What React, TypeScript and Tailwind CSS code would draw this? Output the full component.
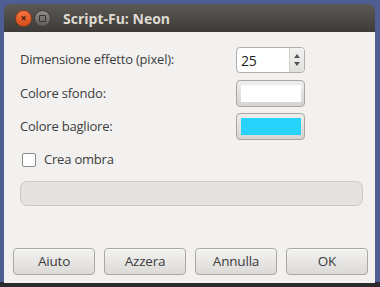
import React from 'react';

const font = { fontFamily: '"Open Sans", "DejaVu Sans", sans-serif' };

const DialogButton: React.FC<{ label: string }> = ({ label }) => (
  <button className="w-[82px] h-[27px] rounded-[4px] border border-[#a9a7a3] bg-gradient-to-b from-[#f4f3f2] to-[#dcdad7] text-[13.5px] text-[#3c3c3c] shadow-[inset_0_1px_0_#ffffff]">
    {label}
  </button>
);

const ColorButton: React.FC<{ color: string }> = ({ color }) => (
  <div className="w-[69px] h-[27px] rounded-[4px] border border-[#a9a7a3] bg-gradient-to-b from-[#efeeed] to-[#d6d4d1] flex items-center justify-center">
    <div className={`w-[60px] h-[17px] ${color}`} />
  </div>
);

export default function App() {
  return (
    <div className="w-[380px] h-[287px] bg-[#4f5d93] relative overflow-hidden" style={font}>
      <div className="absolute left-0 right-0 bottom-0 h-[5px] bg-[#2b2a2c]" />
      <div className="absolute left-[4px] top-[4px] w-[371px] h-[279px] flex flex-col">
        {/* title bar */}
        <div className="h-[28px] rounded-t-[7px] bg-gradient-to-b from-[#5c5a55] to-[#3c3b37] flex items-center pl-[11px] gap-[2px]">
          <div className="w-[17px] h-[17px] rounded-full bg-gradient-to-b from-[#f7733f] to-[#d94d1c] border border-[#8a3a1a] flex items-center justify-center text-[#3b1a0a] text-[10px] font-bold leading-none">
            ×
          </div>
          <div className="w-[17px] h-[17px] rounded-full bg-gradient-to-b from-[#8f8d88] to-[#5e5c58] border border-[#3a3935] flex items-center justify-center">
            <div className="w-[7px] h-[7px] border border-[#35342f] rounded-[1px]" />
          </div>
          <span className="ml-[10px] text-[14px] font-bold text-[#dfdbd2]">Script-Fu: Neon</span>
        </div>
        {/* body */}
        <div className="flex-1 bg-[#f2f1f0] flex flex-col text-[13px] tracking-[-0.2px] text-[#3c3c3c]">
          <div className="pl-[16px] pr-[12px] pt-[15px] flex flex-col">
            <div className="flex items-center h-[26px]">
              <span className="w-[216px]">Dimensione effetto (pixel):</span>
              <div className="w-[69px] h-[26px] rounded-[4px] border border-[#b0aeaa] bg-white flex overflow-hidden">
                <span className="flex-1 pl-[4px] flex items-center text-[14px] text-[#202020]">25</span>
                <div className="w-[15px] border-l border-[#d0cecb] bg-gradient-to-b from-[#f4f3f2] to-[#e2e0dd] flex flex-col items-center justify-center gap-[4px]">
                  <div className="w-0 h-0 border-l-[3px] border-r-[3px] border-b-[4px] border-l-transparent border-r-transparent border-b-[#555]" />
                  <div className="w-0 h-0 border-l-[3px] border-r-[3px] border-t-[4px] border-l-transparent border-r-transparent border-t-[#555]" />
                </div>
              </div>
            </div>
            <div className="flex items-center h-[27px] mt-[7px]">
              <span className="w-[216px]">Colore sfondo:</span>
              <ColorButton color="bg-white" />
            </div>
            <div className="flex items-center h-[27px] mt-[6px]">
              <span className="w-[216px]">Colore bagliore:</span>
              <ColorButton color="bg-[#27d3fc]" />
            </div>
            <div className="flex items-center mt-[10px] pl-[2px] gap-[8px]">
              <div className="w-[14px] h-[14px] rounded-[2px] border border-[#8c8a87] bg-white" />
              <span>Crea ombra</span>
            </div>
            <div className="mt-[11px] w-[343px] h-[25px] rounded-[7px] border border-[#cac8c5] bg-[#e3e2e0]" />
          </div>
          <div className="mt-auto mb-[8px] flex gap-[9px] pl-[9px]">
            <DialogButton label="Aiuto" />
            <DialogButton label="Azzera" />
            <DialogButton label="Annulla" />
            <DialogButton label="OK" />
          </div>
        </div>
      </div>
    </div>
  );
}
